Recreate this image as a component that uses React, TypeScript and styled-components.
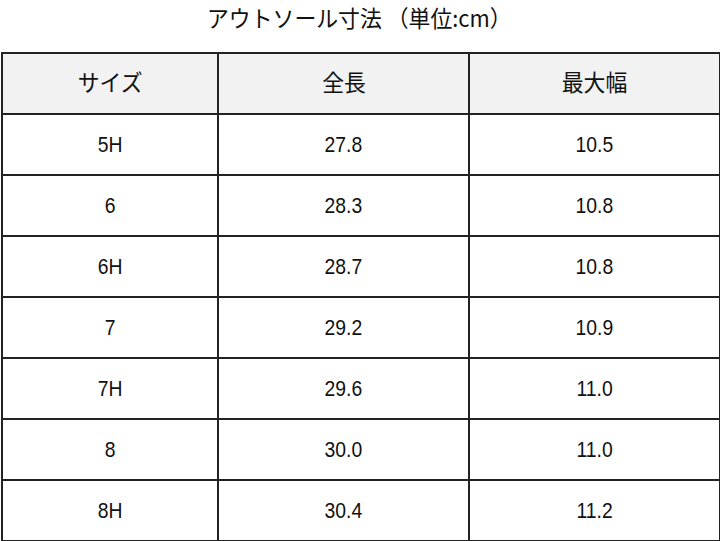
import styled, { createGlobalStyle } from "styled-components";

const GlobalStyle = createGlobalStyle`
    html, body {
        margin: 0;
        padding: 0;
        background: #ffffff;
    }
    body {
        font-family: "Noto Sans CJK JP", "Liberation Sans", sans-serif;
        color: #111111;
    }
`

const rows = [
    ["5H", "27.8", "10.5"],
    ["6", "28.3", "10.8"],
    ["6H", "28.7", "10.8"],
    ["7", "29.2", "10.9"],
    ["7H", "29.6", "11.0"],
    ["8", "30.0", "11.0"],
    ["8H", "30.4", "11.2"],
]

export default function App() {
    return (
        <>
            <GlobalStyle/>
            <Page>
                <Title>
                    <Narrow $scale={0.95}>アウトソール寸法 （単位:cm）</Narrow>
                </Title>
                <Table>
                    <colgroup>
                        <col style={{width: 216}}/>
                        <col style={{width: 251}}/>
                        <col style={{width: 251}}/>
                    </colgroup>
                    <thead>
                        <tr>
                            <HeadCell><Narrow $scale={0.95}>サイズ</Narrow></HeadCell>
                            <HeadCell><Narrow $scale={0.95}>全長</Narrow></HeadCell>
                            <HeadCell><Narrow $scale={0.95}>最大幅</Narrow></HeadCell>
                        </tr>
                    </thead>
                    <tbody>
                        {rows.map((r) => (
                            <tr key={r[0]}>
                                {r.map((v, i) => (
                                    <Cell key={i}><Narrow $scale={0.88}>{v}</Narrow></Cell>
                                ))}
                            </tr>
                        ))}
                    </tbody>
                </Table>
            </Page>
        </>
    );
}

const Page = styled.div`
    width: 720px;
    height: 541px;
    overflow: hidden;
`

const Title = styled.div`
    height: 34px;
    line-height: 34px;
    margin-bottom: 18px;
    text-align: center;
    font-size: 23px;
    padding-right: 2px;
`

const Narrow = styled.span<{ $scale: number }>`
    display: inline-block;
    transform: scaleX(${(p) => p.$scale});
`

const Table = styled.table`
    width: 718px;
    border-collapse: collapse;
    table-layout: fixed;
    margin-left: 1px;

    tr {
        height: 61px;
    }
`

const HeadCell = styled.th`
    background: #f2f2f2;
    border: 2px solid #222222;
    font-weight: normal;
    font-size: 23px;
    line-height: 1;
    text-align: center;
    vertical-align: middle;
    padding: 0 0 4px;
`

const Cell = styled.td`
    border: 2px solid #222222;
    font-family: "Liberation Sans", "Noto Sans CJK JP", sans-serif;
    font-size: 22px;
    line-height: 1;
    text-align: center;
    vertical-align: middle;
    padding: 0;
`
